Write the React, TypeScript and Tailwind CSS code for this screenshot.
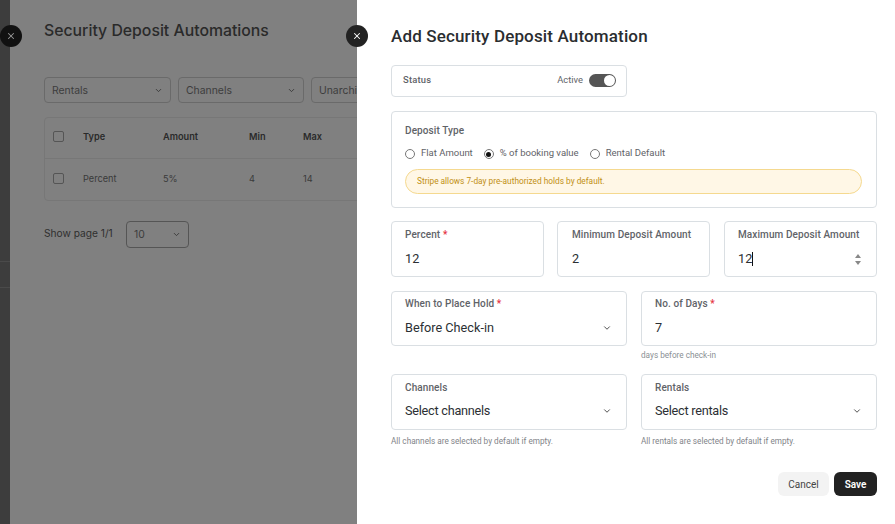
import { ChevronDown, X } from "lucide-react";

const sans = "font-['Roboto',sans-serif]";

function Chevron({ className }: { className: string }) {
  return <ChevronDown className={className} strokeWidth={2.25} />;
}

function Field({
  label,
  required,
  value,
  select,
  className,
  valueGap = "mt-[8px]",
  children,
}: {
  label: string;
  required?: boolean;
  value: string;
  select?: boolean;
  className: string;
  valueGap?: string;
  children?: React.ReactNode;
}) {
  return (
    <div className={`flex flex-col rounded border border-[#dadfe3] pr-[14px] ${className}`}>
      <div className="text-[10px] leading-[14px] font-medium tracking-[0.1px] whitespace-nowrap text-[#5f6368]">
        {label}
        {required && <span className="text-[#e5323f]"> *</span>}
      </div>
      <div className={`flex items-center justify-between text-[12.7px] leading-[18px] text-[#2b2f33] ${valueGap}`}>
        {value && <span>{value}</span>}
        {select && <Chevron className="h-[10px] w-[10px] text-[#444]" />}
        {children}
      </div>
    </div>
  );
}

function Radio({ label, checked }: { label: string; checked?: boolean }) {
  return (
    <div className="flex items-center gap-[6px] text-[9.5px] text-[#5f6368]">
      <span className="flex h-[10px] w-[10px] items-center justify-center rounded-full border border-[#777] bg-white">
        {checked && <span className="h-[5px] w-[5px] rounded-full bg-[#111]" />}
      </span>
      <span className="-mt-[2px]">{label}</span>
    </div>
  );
}

function Filter({ label, className }: { label: string; className: string }) {
  return (
    <div className={`flex h-[26px] shrink-0 items-center justify-between rounded border border-[#6a6a6a] pl-[7px] pr-[7px] text-[10.4px] text-[#3d3d3d] ${className}`}>
      <span className="mt-px">{label}</span>
      <Chevron className="h-[9px] w-[9px] text-[#333]" />
    </div>
  );
}

function Checkbox() {
  return <span className="h-[11px] w-[11px] rounded-[2px] border border-[#555]" />;
}

function BackPanel() {
  return (
    <div className="h-full w-[347px] shrink-0 overflow-hidden bg-[#808080] pl-[34px] font-['Inter',sans-serif]">
      <h2 className="pt-[20px] text-[15.8px] leading-[22px] font-medium text-[#2a2a2a]">Security Deposit Automations</h2>
      <div className="mt-[35px] flex gap-[7px]">
        <Filter label="Rentals" className="w-[127px]" />
        <Filter label="Channels" className="w-[126px]" />
        <Filter label="Unarchived" className="w-[126px]" />
      </div>
      <div className="mt-[14px] w-[400px] rounded border border-[#777] text-[9.2px] text-[#3a3a3a]">
        <div className="flex h-[41px] items-center border-b border-[#777] pb-[3px] pl-[8px] font-semibold text-[#2a2a2a]">
          <Checkbox />
          <span className="ml-[19px] w-[80px]">Type</span>
          <span className="w-[86px]">Amount</span>
          <span className="w-[54px]">Min</span>
          <span>Max</span>
        </div>
        <div className="flex h-[41px] items-center pb-[2px] pl-[8px]">
          <Checkbox />
          <span className="ml-[19px] w-[80px]">Percent</span>
          <span className="w-[86px]">5%</span>
          <span className="w-[54px]">4</span>
          <span>14</span>
        </div>
      </div>
      <div className="mt-5 flex items-center">
        <span className="-mt-[2px] w-[82px] text-[10.2px] text-[#2f2f2f]">Show page 1/1</span>
        <div className="flex h-[27px] w-[63px] items-center justify-between rounded border border-[#555] pl-[7px] pr-[7px] text-[10.4px] text-[#3d3d3d]">
          <span>10</span>
          <Chevron className="h-[9px] w-[9px] text-[#333]" />
        </div>
      </div>
    </div>
  );
}

function FormPanel() {
  return (
    <div className={`h-full flex-1 bg-white pl-[34px] pr-[18px] ${sans}`}>
      <h1 className="pt-[26px] text-[17px] leading-[20px] font-medium tracking-[0.15px] text-[#2a2d30]">Add Security Deposit Automation</h1>

      <div className="mt-[19px] flex h-[32px] w-[236px] items-center justify-between rounded border border-[#dadfe3] pl-[11px] pr-[10px] text-[9.4px] text-[#5f6368]">
        <span className="mb-[2px] font-medium tracking-[0.2px]">Status</span>
        <div className="flex items-center gap-[6px]">
          <span className="mb-[2px]">Active</span>
          <span className="flex h-[13px] w-[27px] items-center justify-end rounded-full bg-[#555] pr-px">
            <span className="h-[11px] w-[11px] rounded-full bg-white" />
          </span>
        </div>
      </div>

      <div className="mt-[14px] h-[97px] rounded border border-[#dadfe3] pl-[13px] pr-[14px] pt-[12px]">
        <div className="text-[10px] leading-[14px] font-medium tracking-[0.1px] text-[#5f6368]">Deposit Type</div>
        <div className="mt-[6px] flex h-[20px] items-center gap-[11px]">
          <Radio label="Flat Amount" />
          <Radio label="% of booking value" checked />
          <Radio label="Rental Default" />
        </div>
        <div className="mt-[5px] flex h-[25px] items-center rounded-full border border-[#f5d98f] bg-[#fff7e6] px-[11px] text-[8.3px] text-[#c18f14]">
          Stripe allows 7-day pre-authorized holds by default.
        </div>
      </div>

      <div className="mt-[13px] flex">
        <Field label="Percent" required value="12" className="h-[56px] w-[153px] pl-[13px] pt-[6px]" />
        <Field label="Minimum Deposit Amount" value="2" className="ml-[13px] h-[56px] w-[153px] pl-[14px] pt-[6px]" />
        <Field label="Maximum Deposit Amount" value="" className="ml-[14px] h-[56px] w-[153px] pl-[13px] pt-[6px]">
          <span className="flex w-full items-center justify-between">
            <span className="flex h-[18px] items-center">
              12
              <span className="h-[14px] w-px bg-[#111]" />
            </span>
            <span className="mr-px flex flex-col gap-[3px]">
              <span className="h-0 w-0 border-x-[3.5px] border-b-[4px] border-x-transparent border-b-[#888]" />
              <span className="h-0 w-0 border-x-[3.5px] border-t-[4px] border-x-transparent border-t-[#888]" />
            </span>
          </span>
        </Field>
      </div>

      <div className="mt-[14px] grid grid-cols-2 gap-x-[14px]">
        <Field label="When to Place Hold" required value="Before Check-in" select className="h-[55px] pl-[13px] pt-[5px]" />
        <Field label="No. of Days" required value="7" className="h-[55px] pl-[13px] pt-[5px]" />
        <span />
        <p className="mt-[3px] h-[13px] text-[8.2px] leading-[13px] text-[#8a8f94]">days before check-in</p>
      </div>

      <div className="mt-[12px] grid grid-cols-2 gap-x-[14px]">
        <Field label="Channels" value="Select channels" select valueGap="mt-[7px] tracking-[-0.25px]" className="h-[56px] pl-[13px] pt-[6px]" />
        <Field label="Rentals" value="Select rentals" select valueGap="mt-[7px] tracking-[-0.25px]" className="h-[56px] pl-[13px] pt-[6px]" />
        <p className="mt-[5px] text-[8.2px] leading-[13px] text-[#7f8489]">All channels are selected by default if empty.</p>
        <p className="mt-[5px] text-[8.2px] leading-[13px] text-[#7f8489]">All rentals are selected by default if empty.</p>
      </div>

      <div className="mt-[24px] flex justify-end gap-[5px] text-[10px]">
        <button className="h-[24px] w-[51px] rounded-md bg-[#f3f3f3] text-[#444]">Cancel</button>
        <button className="h-[24px] w-[43px] rounded-md bg-[#222] font-semibold text-white">Save</button>
      </div>
    </div>
  );
}

function CloseButton({ className }: { className: string }) {
  return (
    <span className={`absolute top-[25px] flex h-[22px] w-[22px] items-center justify-center rounded-full ${className}`}>
      <X className="h-[10px] w-[10px]" strokeWidth={2.5} />
    </span>
  );
}

export default function App() {
  return (
    <div className="relative flex h-[524px] w-[895px] overflow-hidden bg-white">
      <div className="flex h-full w-[10px] shrink-0 flex-col bg-[#3d3d3d]">
        <div className="mt-[261px] h-px bg-[#4a4a4a]" />
        <div className="mt-[25px] h-px bg-[#4a4a4a]" />
      </div>
      <BackPanel />
      <FormPanel />
      <CloseButton className="left-0 bg-[#111] text-[#999]" />
      <CloseButton className="left-[346px] bg-[#222] text-white" />
    </div>
  );
}
